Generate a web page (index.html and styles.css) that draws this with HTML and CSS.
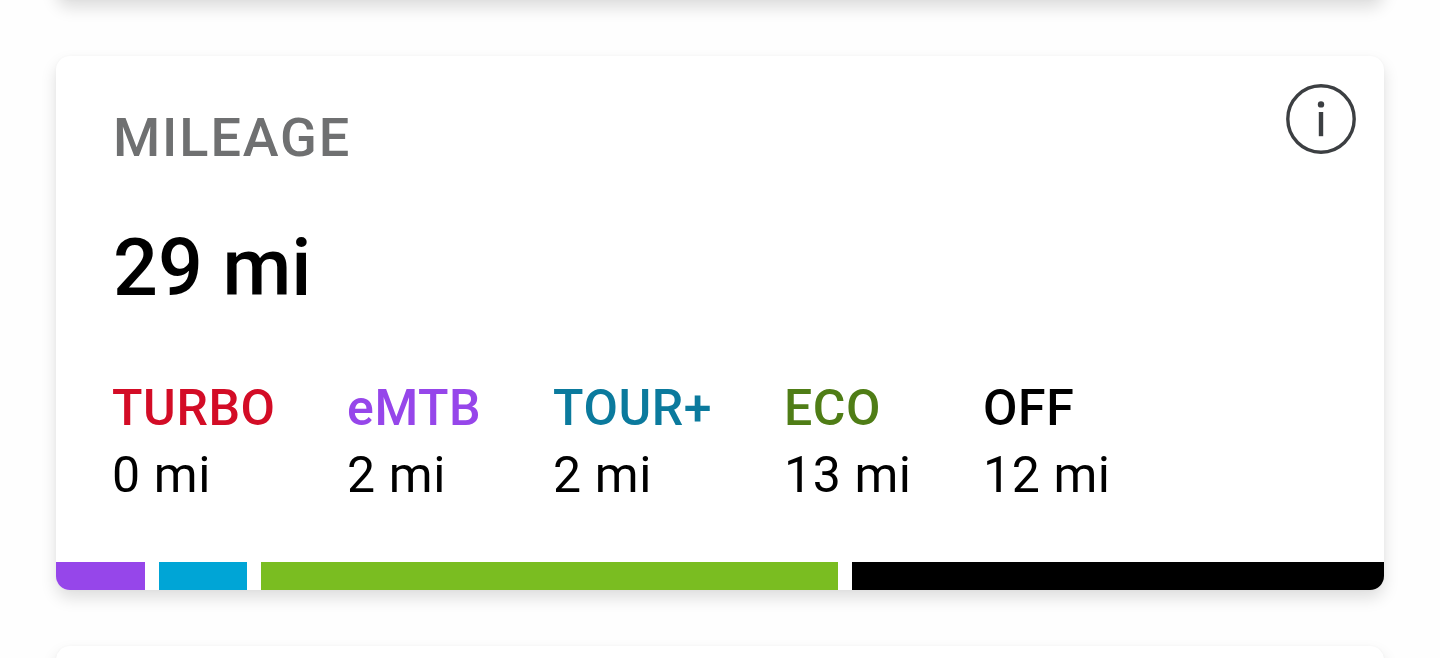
FILE: index.html
```html
<!DOCTYPE html>
<html lang="en">
<head>
<meta charset="utf-8">
<title>Mileage</title>
<link rel="stylesheet" href="styles.css">
</head>
<body>
<main class="page">
  <div class="card card-prev"></div>
  <section class="card card-mileage">
    <div class="card-body">
      <svg class="info" width="70" height="70" viewBox="0 0 70 70" aria-label="info">
        <circle cx="35" cy="35" r="33.2" fill="none" stroke="#3c3f42" stroke-width="3.4"/>
        <circle cx="35" cy="20.4" r="3.2" fill="#3c3f42"/>
        <rect x="32.8" y="28" width="4.4" height="24.2" fill="#3c3f42"/>
      </svg>
      <h2 class="title">MILEAGE</h2>
      <p class="total">29 mi</p>
      <ul class="modes">
        <li class="mode mode-turbo"><span class="mode-name">TURBO</span><span class="mode-value">0 mi</span></li>
        <li class="mode mode-emtb"><span class="mode-name">eMTB</span><span class="mode-value">2 mi</span></li>
        <li class="mode mode-tour"><span class="mode-name">TOUR+</span><span class="mode-value">2 mi</span></li>
        <li class="mode mode-eco"><span class="mode-name">ECO</span><span class="mode-value">13 mi</span></li>
        <li class="mode mode-off"><span class="mode-name">OFF</span><span class="mode-value">12 mi</span></li>
      </ul>
    </div>
    <div class="bar">
      <span class="seg seg-emtb" style="width:89px"></span>
      <span class="seg seg-tour" style="width:88px"></span>
      <span class="seg seg-eco" style="width:577px"></span>
      <span class="seg seg-off" style="width:532px"></span>
    </div>
  </section>
  <div class="card card-next"></div>
</main>
</body>
</html>
```

FILE: styles.css
```css
* { box-sizing: border-box; }
html, body { margin: 0; height: 100%; }
body {
  background: #fefefe;
  font-family: Roboto, "Liberation Sans", sans-serif;
  overflow: hidden;
}
.page {
  display: flex;
  flex-direction: column;
  gap: 56px;
  height: 658px;
  padding: 0 56px;
  overflow: hidden;
}
.card {
  background: #fff;
  border-radius: 14px;
  box-shadow: 0 8px 16px rgba(0, 0, 0, 0.13), 0 0 3px rgba(0, 0, 0, 0.03);
  flex: none;
}
.card-prev { height: 100px; margin-top: -100px; }
.card-next { height: 60px; }
.card-mileage {
  height: 534px;
  display: flex;
  flex-direction: column;
  overflow: hidden;
}
.card-body {
  position: relative;
  flex: 1;
  padding: 52px 56px 0;
}
.info { position: absolute; top: 28px; right: 28px; }
.title {
  margin: 0 0 0 1px;
  font-size: 54px;
  line-height: 60px;
  font-weight: 500;
  color: #6f7071;
  letter-spacing: 1.9px;
}
.total {
  margin: 55px 0 0 1px;
  font-size: 79px;
  line-height: 90px;
  font-weight: 500;
  color: #000;
}
.modes {
  list-style: none;
  margin: 66px 0 0;
  padding: 0;
  display: flex;
  letter-spacing: 0.6px;
}
.mode { display: flex; flex-direction: column; }
.mode-turbo { width: 235px; }
.mode-emtb { width: 206px; }
.mode-tour { width: 231px; }
.mode-eco { width: 199px; }
.mode-name { font-size: 50px; line-height: 58px; font-weight: 500; }
.mode-value { font-size: 50px; line-height: 58px; color: #000; margin-top: 9px; }
.mode-turbo .mode-name { color: #d30c26; }
.mode-emtb .mode-name { color: #9646ea; }
.mode-tour .mode-name { color: #0b7a9d; }
.mode-eco .mode-name { color: #4f7d16; }
.mode-off .mode-name { color: #000; }
.bar { display: flex; gap: 14px; height: 28px; flex: none; }
.seg { display: block; height: 100%; }
.seg-emtb { background: #9646ea; }
.seg-tour { background: #00a5d6; }
.seg-eco { background: #7abd21; }
.seg-off { background: #000; }
```
